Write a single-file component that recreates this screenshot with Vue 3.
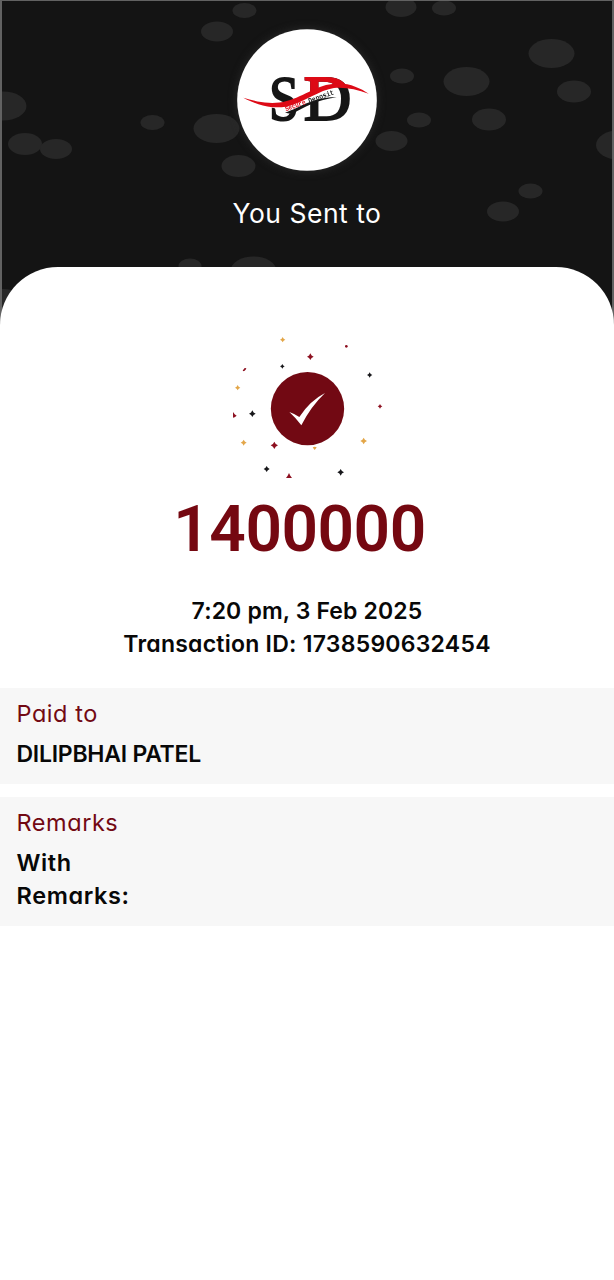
<script setup>
const blobs = [
  [217, 31.5, 16, 10], [3, 106, 23.5, 14.5], [25, 144, 17, 11], [56, 149, 16, 10],
  [152.5, 122.5, 12, 7.5], [216.5, 128.5, 23, 14.5], [238.5, 166, 17, 11], [244.5, 10.5, 12, 7.5],
  [190, 266, 11.5, 7.5], [253.5, 271, 23, 14.5], [4, 299, 16, 10], [401, 7, 15.5, 10],
  [444, 8, 12, 7.5], [551.5, 53.5, 23, 14.5], [466.5, 81.5, 23, 14.5], [402, 76, 12, 7.5],
  [574, 91.5, 17, 11], [489, 119.5, 17, 11], [419, 120, 12, 7.5], [391.5, 141, 16, 10],
  [618, 145, 22, 14.5], [530.5, 191, 12, 7.5], [503, 211.5, 16, 10],
]

const maroon = '#8d1020'
const gold = '#e3a648'
const black = '#17171a'
const stars = [
  [188, 44, 8, gold], [271, 95, 10, maroon], [187, 124, 7, black], [449, 150, 8, black],
  [53, 188, 8, gold], [97, 266, 10, black], [71, 353, 9, gold], [163, 361, 11, maroon],
  [431, 348, 10, gold], [140, 432, 9, black], [362, 442, 10, black], [480, 244, 7, maroon],
]
const star = ([x, y, r]) => {
  const k = r * 0.38
  return `M${x} ${y - r}L${x + k} ${y - k}L${x + r} ${y}L${x + k} ${y + k}L${x} ${y + r}L${x - k} ${y + k}L${x - r} ${y}L${x - k} ${y - k}Z`
}
</script>

<template>
  <main class="screen">
    <header class="hero">
      <svg class="blobs" width="614" height="330" viewBox="0 0 614 330" aria-hidden="true">
        <ellipse v-for="(b, i) in blobs" :key="i" :cx="b[0]" :cy="b[1]" :rx="b[2]" :ry="b[3]" />
      </svg>
      <svg class="logo" width="140" height="142" viewBox="21 26 420 426">
        <defs>
          <clipPath id="above">
            <path d="M200 150H380V206Q345 190 300 208Q260 222 200 250Z" />
          </clipPath>
        </defs>
        <ellipse cx="231" cy="239" rx="209.5" ry="212.5" fill="#fff" />
        <g class="letters">
          <text x="117" y="299" textLength="90" lengthAdjust="spacingAndGlyphs">S</text>
          <text x="221" y="299" textLength="143" lengthAdjust="spacingAndGlyphs">D</text>
          <text class="red" clip-path="url(#above)" x="221" y="299" textLength="143" lengthAdjust="spacingAndGlyphs">D</text>
        </g>
        <path fill="#fff" d="M118 256C180 262 225 233 270 213C292 204 306 204 318 208L322 232C270 232 225 250 182 279L158 276Z" />
        <path fill="#161616" d="M165 277C210 262 252 229 320 231C260 239 225 260 186 281Z" />
        <path fill="#dd0a16" d="M40 232C80 244 125 255 170 242C230 225 260 192 318 190C360 188 390 204 416 220C380 207 345 200 312 203C270 208 220 248 168 259C115 267 72 249 40 232Z" />
        <g class="tagline" transform="rotate(-20 168 273)">
          <text class="red" x="168" y="273" textLength="64" lengthAdjust="spacingAndGlyphs">Secure</text>
          <text x="242" y="274" textLength="80" lengthAdjust="spacingAndGlyphs">Deposit</text>
        </g>
      </svg>
      <h1>You Sent to</h1>
    </header>

    <section class="sheet">
      <svg class="burst" width="175" height="165" viewBox="0 0 525 495" aria-hidden="true">
        <path v-for="(s, i) in stars" :key="i" :d="star(s)" :fill="s[3]" />
        <circle cx="379" cy="64" r="4" :fill="maroon" />
        <path :fill="maroon" d="M68 137L73 130L79 129L77 134L72 139ZM39 261L44 268L50 272L44 277L39 278ZM198 459L203 452L207 444L211 452L216 459Z" />
        <circle cx="262.500" cy="251" r="110" fill="#720913" />
        <path :fill="gold" d="M278 367L284 365L290 367L287 371L284 375L281 371Z" />
        <path fill="#fff" d="M208 261Q225 267 238 276Q270 227 315 204Q272 245 244 301Q227 278 208 261Z" />
      </svg>
      <p class="amount">1400000</p>
      <p class="meta"><span class="date">7:20 pm, 3 Feb 2025</span><span class="txn">Transaction ID: 1738590632454</span></p>
      <dl class="card">
        <dt>Paid to</dt>
        <dd class="name">DILIPBHAI PATEL</dd>
      </dl>
      <dl class="card remarks">
        <dt>Remarks</dt>
        <dd class="note">With<br>Remarks:</dd>
      </dl>
    </section>
  </main>
</template>

<style>
body { margin: 0; background: #fff; }
</style>

<style scoped>
.screen {
  position: relative;
  width: 614px;
  height: 1280px;
  overflow: hidden;
  font-family: Inter, "Open Sans", sans-serif;
  font-feature-settings: "cv11";
  color: #080808;
}
.hero {
  position: relative;
  display: flex;
  flex-direction: column;
  align-items: center;
  box-sizing: border-box;
  height: 330px;
  padding-top: 28px;
  background: #141414;
  border: 2px solid #626262;
  border-top-width: 1px;
  border-bottom: 0;
}
.blobs { position: absolute; top: -1px; left: -2px; fill: #272727; clip-path: inset(1px 2px 0); }
.logo { position: relative; display: block; filter: drop-shadow(0 0 4px #2a2a2a); }
.letters text { font: 400 192px "Liberation Serif", serif; fill: #161616; stroke: #161616; stroke-width: 6px; }
.letters .red { fill: #dd0a16; stroke: #dd0a16; }
.tagline text { font: 700 22px "Liberation Mono", monospace; fill: #222; }
.tagline .red { fill: #dd0a16; }
h1 {
  position: relative;
  margin: 24px 0 0;
  font-size: 26.5px;
  line-height: 36px;
  font-weight: 400;
  letter-spacing: 0.5px;
  color: #fff;
}
.sheet {
  position: relative;
  display: flex;
  flex-direction: column;
  align-items: center;
  margin-top: -63px;
  padding-top: 58px;
  height: 955px;
  background: #fff;
  border-radius: 58px 58px 0 0;
}
.burst { display: block; }
.amount {
  margin: 2px 15px 0 0;
  font: 600 64px/76px Roboto, sans-serif;
  letter-spacing: -0.5px;
  color: #750811;
}
.meta {
  display: flex;
  flex-direction: column;
  align-items: center;
  margin: 27px 0 0;
  font-size: 23px;
  line-height: 33px;
  font-weight: 600;
}
.date { letter-spacing: 0.15px; }
.txn { letter-spacing: 0.25px; }
.card {
  align-self: stretch;
  box-sizing: border-box;
  height: 96px;
  margin: 27px 0 0;
  padding: 9px 16.5px 0;
  background: #f7f7f7;
  font-size: 23px;
  line-height: 33px;
}
.card.remarks { height: 129px; margin-top: 13px; }
dt { color: #720913; font-weight: 400; font-size: 23.5px; letter-spacing: 0.55px; }
dd { margin: 8px 0 0; font-weight: 600; }
.name { letter-spacing: -0.25px; }
.note { margin-top: 7px; font-size: 23.5px; letter-spacing: 0.6px; }
</style>
